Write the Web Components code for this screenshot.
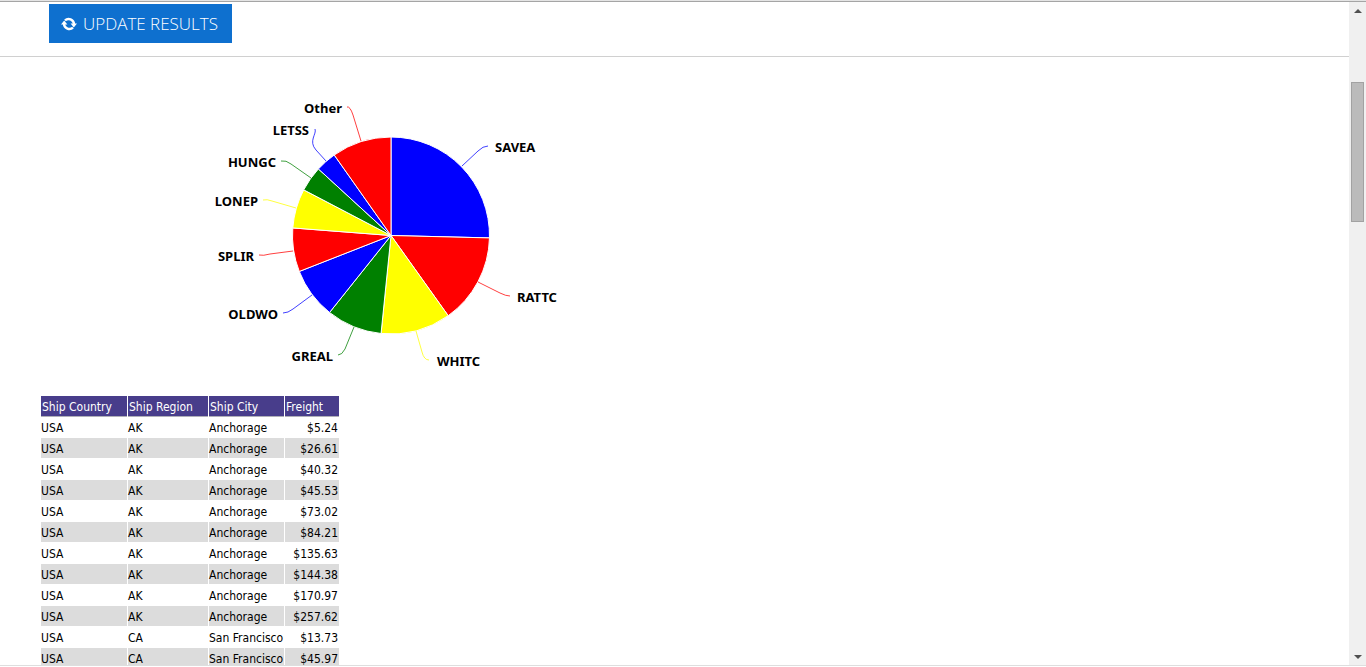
<!DOCTYPE html>
<html lang="en">
<head>
<meta charset="utf-8">
<title>Freight report</title>
<style>
html, body { margin: 0; height: 100%; }
body { background: #fff; color: #000; overflow: hidden; font-family: "DejaVu Sans Condensed", "DejaVu Sans", "Noto Sans", sans-serif; }
</style>
</head>
<body>
<report-window>
  <report-toolbar><update-button>UPDATE RESULTS</update-button></report-toolbar>
  <pie-chart></pie-chart>
  <freight-table></freight-table>
</report-window>

<script>
function define(name, html, setup) {
  const template = document.createElement('template');
  template.innerHTML = html;
  customElements.define(name, class extends HTMLElement {
    constructor() {
      super();
      const root = this.attachShadow({ mode: 'open' });
      root.append(template.content.cloneNode(true));
      if (setup) setup(root);
    }
  });
}

define('scroll-rail', `
<style>
:host { display: flex; flex-direction: column; background: #f0f0f0; }
button { border: 0; padding: 0; height: 17px; background: none; display: flex; align-items: center; justify-content: center; }
.track { flex: 1; padding: 63px 2px 0; }
.thumb { box-sizing: border-box; height: 140px; background: #bbb; border: 1px solid #a2a2a2; }
svg { display: block; }
</style>
<button type="button" aria-label="Scroll up"><svg width="8" height="4"><path d="M0 4L4 0L8 4Z" fill="#505050"/></svg></button>
<div class="track"><div class="thumb"></div></div>
<button type="button" aria-label="Scroll down"><svg width="8" height="4"><path d="M0 0L4 4L8 0Z" fill="#505050"/></svg></button>
`);

define('report-window', `
<style>
:host { display: flex; flex-direction: column; height: 100vh; box-sizing: border-box; border-top: 1px solid #e4e4e4; }
.frame { flex: 1; min-height: 0; display: grid; grid-template-columns: minmax(0, 1fr) 17px; border-top: 1px solid #a5a5a5; border-bottom: 1px solid #dedede; margin-bottom: 1px; }
main { overflow: hidden; min-height: 0; }
</style>
<div class="frame"><main><slot></slot></main><scroll-rail></scroll-rail></div>
`);

define('report-toolbar', `
<style>
:host { display: flex; padding: 2px 49px 13px; border-bottom: 1px solid #d0d0d0; }
</style>
<slot></slot>
`);

define('update-button', `
<style>
:host { display: block; }
button { display: flex; align-items: center; gap: 6px; height: 39px; border: 0; padding: 0 14px 0 12px; background: #0e70cf; color: #fff;
  font: 300 17px/24px "Open Sans", "Noto Sans", sans-serif; white-space: nowrap; }
svg { display: block; }
</style>
<button type="button">
<svg width="16" height="16" viewBox="0 0 16 16" aria-hidden="true">
<path d="M4 4.4A5.4 5.4 0 0 1 13 8M12 11.6A5.4 5.4 0 0 1 3 8" fill="none" stroke="#fff" stroke-width="2.4"/>
<path d="M0 8.6L3.2 4.6L6.4 8.6ZM16 7.4L12.8 11.4L9.6 7.4Z" fill="#fff"/>
</svg>
<span><slot></slot></span></button>
`);

const slices = [
  { name: 'SAVEA', color: 'blue', end: 91.4, x: 495, y: 152, line: 'M462 166L478 151Q483 146 488 146' },
  { name: 'RATTC', color: 'red', end: 144.5, x: 517, y: 302, line: 'M478 282L500 293Q506 296 510 296' },
  { name: 'WHITC', color: 'yellow', end: 185.8, x: 437, y: 366, line: 'M416 331L422 352Q424 360 429 360' },
  { name: 'GREAL', color: 'green', end: 218.6, x: 333, y: 361, line: 'M354 327L345 349Q342 355 338 355' },
  { name: 'OLDWO', color: 'blue', end: 248.6, x: 278, y: 319, line: 'M312 295L293 309Q288 313 283 313' },
  { name: 'SPLIR', color: 'red', end: 274.4, x: 254, y: 261, line: 'M293 251L270 254Q263 256 259 255' },
  { name: 'LONEP', color: 'yellow', end: 297.6, x: 258, y: 206, line: 'M296 208L272 201Q267 199 263 200' },
  { name: 'HUNGC', color: 'green', end: 312.5, x: 276, y: 167, line: 'M311 178L291 164Q286 160 281 161' },
  { name: 'LETSS', color: 'blue', end: 324.8, x: 309, y: 135, line: 'M326 161L316 150C308 141 317 134 315 129' },
  { name: 'Other', color: 'red', end: 360, x: 342, y: 113, line: 'M361 141L353 115Q350 106 347 107' }
];

define('pie-chart', `
<style>
:host { display: block; padding: 33px 0 5px 200px; }
svg { display: block; }
.line { fill: none; stroke-width: 1; opacity: .75; }
text { font: bold 13px "Noto Sans", sans-serif; fill: #000; }
</style>
<svg width="400" height="300" viewBox="200 90 400 300" role="img" aria-label="Freight by customer"></svg>
`, root => {
  const cx = 391, cy = 235.5, r = 98.5;
  const point = deg => {
    const a = deg * Math.PI / 180;
    return (cx + r * Math.sin(a)).toFixed(2) + ' ' + (cy - r * Math.cos(a)).toFixed(2);
  };
  let start = 0, out = '';
  for (const s of slices) {
    out += `<path d="M${cx} ${cy}L${point(start)}A${r} ${r} 0 0 1 ${point(s.end)}Z" fill="${s.color}" stroke="#fff" stroke-width="1"/>`;
    start = s.end;
  }
  for (const s of slices) {
    out += `<path class="line" d="${s.line}" stroke="${s.color}"/>`;
    out += `<text x="${s.x}" y="${s.y}" text-anchor="${s.x < cx ? 'end' : 'start'}">${s.name}</text>`;
  }
  root.querySelector('svg').innerHTML = out;
});

define('freight-table', `
<style>
:host { display: block; padding-left: 40px; }
table { border-collapse: separate; border-spacing: 1px; table-layout: fixed; width: 300px; font-size: 12px; line-height: 18px; }
th, td { padding: 2px 1px 0; text-align: left; font-weight: normal; white-space: nowrap; }
td { padding-left: 0; }
th { background: #483d8b; color: #fff; box-shadow: 0 1px #b0b0b8; }
tbody tr:nth-child(even) td { background: #dcdcdc; }
td:last-child { text-align: right; }
</style>
<table>
<colgroup><col style="width:86px"><col style="width:80px"><col style="width:75px"><col style="width:54px"></colgroup>
<thead><tr><th scope="col">Ship Country</th><th scope="col">Ship Region</th><th scope="col">Ship City</th><th scope="col">Freight</th></tr></thead>
<tbody></tbody>
</table>
`, root => {
  const rows = [
    ...['5.24', '26.61', '40.32', '45.53', '73.02', '84.21', '135.63', '144.38', '170.97', '257.62'].map(v => ['AK', 'Anchorage', v]),
    ...['13.73', '45.97'].map(v => ['CA', 'San Francisco', v])
  ];
  root.querySelector('tbody').innerHTML = rows.map(([region, city, v]) =>
    `<tr><td>USA</td><td>${region}</td><td>${city}</td><td>$${v}</td></tr>`).join('');
});
</script>
</body>
</html>
